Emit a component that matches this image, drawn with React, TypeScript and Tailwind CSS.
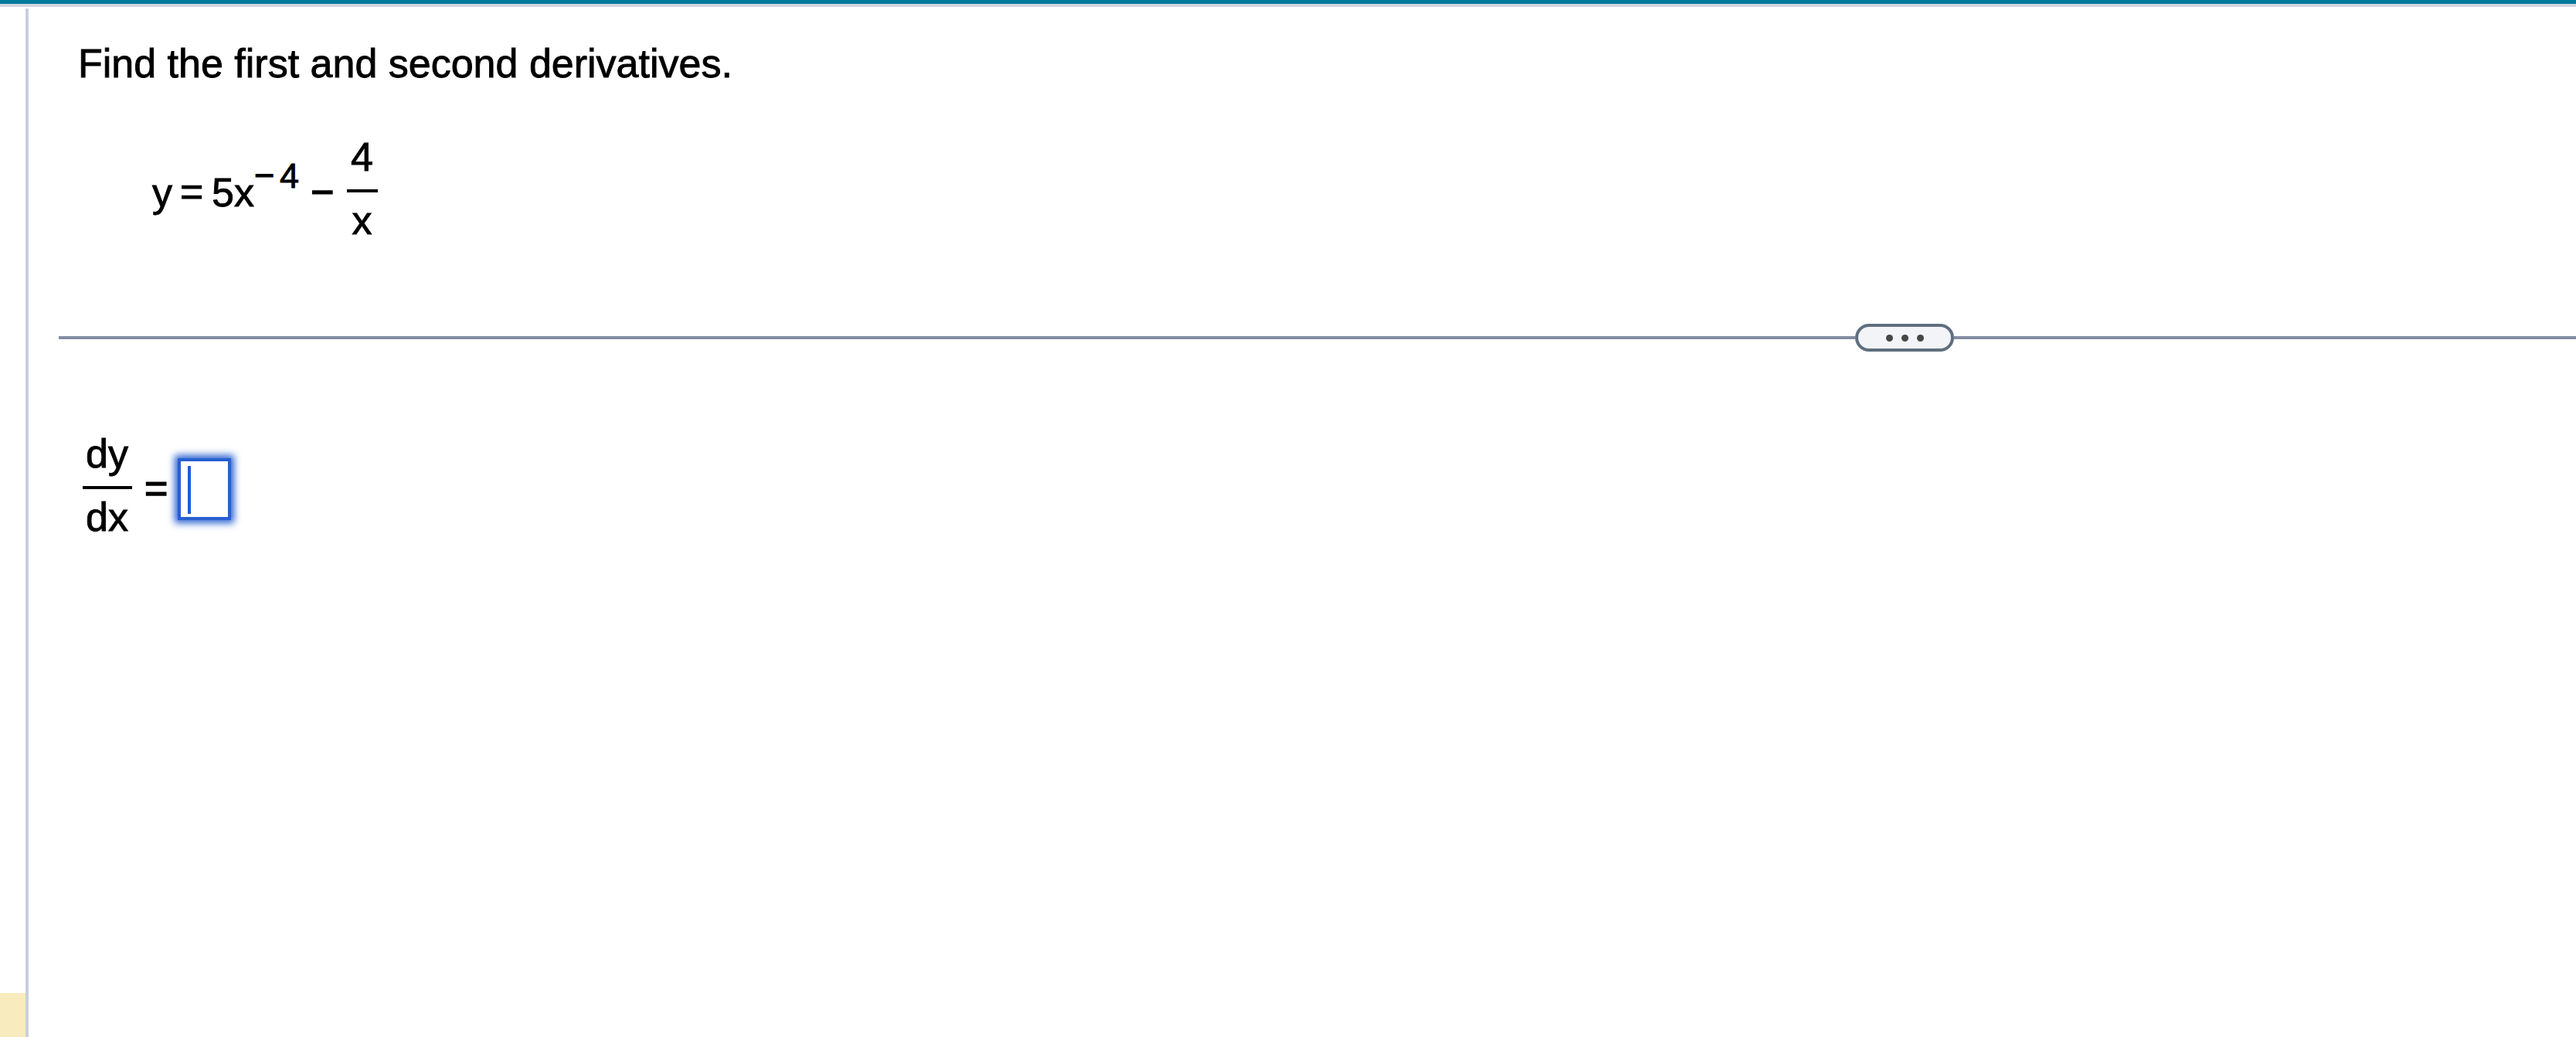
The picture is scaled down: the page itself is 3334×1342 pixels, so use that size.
import { useState } from 'react';
import type { ReactNode } from 'react';

interface FractionProps {
    top: ReactNode;
    bottom: ReactNode;
    className?: string;
}

function Fraction({ top, bottom, className = '' }: FractionProps) {
    return (
        <div className={`flex flex-col items-center ${className}`}>
            <span className="pr-px">{top}</span>
            <div className="mt-3 mb-[6px] h-1 w-full bg-black" />
            <span className="pr-px">{bottom}</span>
        </div>
    );
}

function Divider({ onToggle }: { onToggle: () => void }) {
    return (
        <div className="mt-[104px] ml-[39px] flex h-9 items-center">
            <div className="h-1 w-[2325px] bg-[#858da2]" />
            <button
                onClick={onToggle}
                aria-label="Resize"
                className="flex h-9 w-32 items-center justify-center gap-[11px] rounded-full border-4 border-[#5f6f7f] bg-[#f3f4f7]"
            >
                <span className="size-[9px] rounded-full bg-[#474747]" />
                <span className="size-[9px] rounded-full bg-[#474747]" />
                <span className="size-[9px] rounded-full bg-[#474747]" />
            </button>
            <div className="h-1 flex-1 bg-[#858da2]" />
        </div>
    );
}

export default function App() {
    const [showAnswer, setShowAnswer] = useState(true);

    return (
        <div className="flex h-[1342px] w-[3334px] flex-col overflow-hidden bg-white font-['Liberation_Sans',Arial,sans-serif] text-[52px] leading-[60px] text-black [-webkit-text-stroke:0.9px_black]">
            <header className="h-[9px] shrink-0 border-b-4 border-[#d3d5e1] bg-[#007a9b]" />

            <div className="flex flex-1">
                <aside className="flex w-[33px] flex-col justify-end">
                    <div className="h-[57px] bg-[#f8ebbd]" />
                </aside>
                <div className="mt-[2px] w-1 bg-[#c9cfde]" />

                <main className="flex-1">
                    <h1 className="mt-[43px] ml-16 whitespace-nowrap">
                        Find the first and second derivatives.
                    </h1>

                    <div className="mt-[61px] ml-40 flex h-[142px] items-start whitespace-nowrap">
                        <span className="mt-[46px] w-[36px]">y</span>
                        <span className="mt-[45px] w-[41px]">=</span>
                        <span className="mt-[46px] w-[55px]">5x</span>
                        <span className="mt-[29px] w-[33px] text-[45px] leading-[50px] [-webkit-text-stroke:1.2px_black]">−</span>
                        <span className="mt-[30px] w-10 text-[45px] leading-[50px]">4</span>
                        <span className="mt-[45px] w-[47px] [-webkit-text-stroke:1.5px_black]">−</span>
                        <Fraction top="4" bottom="x" className="w-10" />
                    </div>

                    <Divider onToggle={() => setShowAnswer(!showAnswer)} />

                    {showAnswer && (
                        <div className="mt-[102px] ml-[70px] flex items-start">
                            <Fraction top="dy" bottom="dx" className="w-16" />
                            <span className="mt-[45px] ml-4 w-[43px] [-webkit-text-stroke:1.5px_black]">=</span>
                            {/* focused answer field */}
                            <div className="mt-9 h-20 w-[69px] border-4 border-[#285fce] bg-white pt-[6px] pl-[9px] shadow-[0_0_9px_4px_#2f65d2]">
                                <div className="h-[62px] w-1 bg-[#2159dc]" />
                            </div>
                        </div>
                    )}
                </main>
            </div>
        </div>
    );
}
